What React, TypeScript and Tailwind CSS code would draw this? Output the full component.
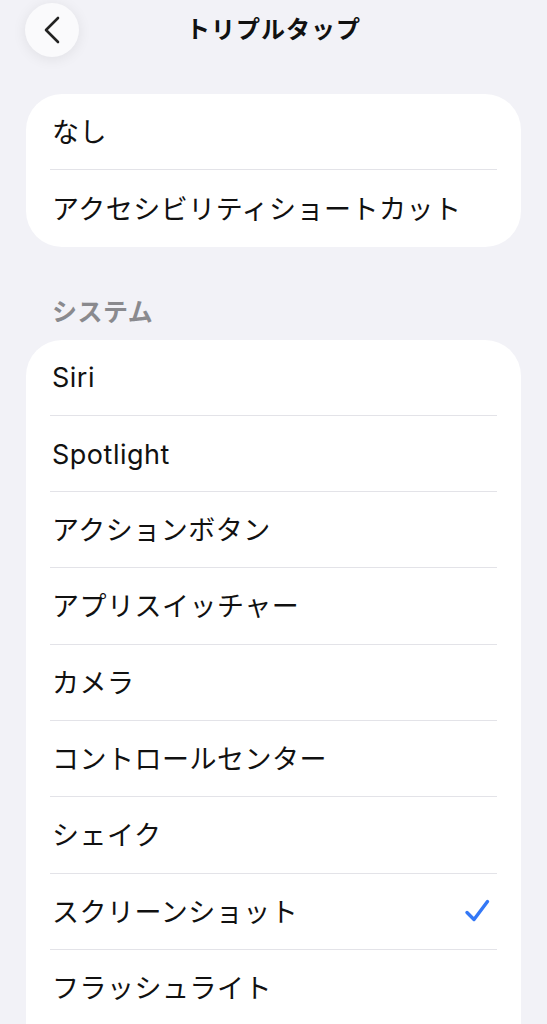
import React from "react"

const font = { fontFamily: 'Inter, "Noto Sans CJK JP", sans-serif' }

const topItems = ["なし", "アクセシビリティショートカット"]

const systemItems = [
  "Siri",
  "Spotlight",
  "アクションボタン",
  "アプリスイッチャー",
  "カメラ",
  "コントロールセンター",
  "シェイク",
  "スクリーンショット",
  "フラッシュライト",
]

const selected = "スクリーンショット"

function Row({ label, last }: { label: string; last: boolean }) {
  return (
    <div className="pl-[24px] pr-[24px]">
      <div
        className={
          "flex h-[76.3px] items-center justify-between pl-[2px] " +
          (last ? "" : "border-b border-[#e3e3e8]")
        }
      >
        <span className="pt-[3px] text-[27px] text-[#111] tracking-[0.5px]">{label}</span>
        {label === selected && (
          <svg width="28" height="28" viewBox="0 0 28 28" className="mr-[6px]">
            <path
              d="M4 15.5 L11 22.5 L24.5 4.5"
              fill="none"
              stroke="#3478f6"
              strokeWidth="3.4"
              strokeLinecap="round"
              strokeLinejoin="round"
            />
          </svg>
        )}
      </div>
    </div>
  )
}

export default function App() {
  return (
    <div className="h-screen overflow-hidden bg-[#f2f2f7]" style={font}>
      <div className="relative flex h-[60px] items-center justify-center">
        <button className="absolute left-[25px] top-[3px] flex h-[54px] w-[54px] items-center justify-center rounded-full bg-[#fafafc] shadow-[0_2px_14px_rgba(0,0,0,0.08)]">
          <svg width="18" height="28" viewBox="0 0 18 28">
            <path
              d="M15 2 L3 14 L15 26"
              fill="none"
              stroke="#222"
              strokeWidth="2.6"
              strokeLinecap="round"
              strokeLinejoin="round"
            />
          </svg>
        </button>
        <h1 className="text-[24px] font-bold text-[#111] tracking-[1px]">トリプルタップ</h1>
      </div>

      <div className="mx-[26px] mt-[34px] overflow-hidden rounded-[36px] bg-white">
        {topItems.map((t, i) => (
          <Row key={t} label={t} last={i === topItems.length - 1} />
        ))}
      </div>

      <div className="px-[52px] pt-[50px] pb-[12px] text-[25px] font-semibold text-[#8a8a8e] leading-[31px] tracking-[0.5px]">
        システム
      </div>

      <div className="mx-[26px] overflow-hidden rounded-t-[36px] bg-white">
        {systemItems.map((t) => (
          <Row key={t} label={t} last={false} />
        ))}
        <div className="h-[80px]" />
      </div>
    </div>
  )
}
